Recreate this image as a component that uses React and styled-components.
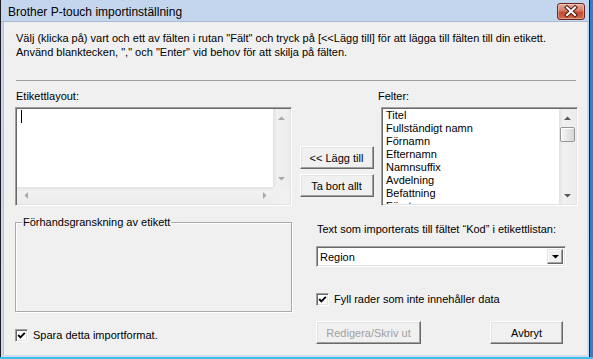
import React from 'react';
import styled, { createGlobalStyle } from 'styled-components';

const fields = [
    'Titel',
    'Fullständigt namn',
    'Förnamn',
    'Efternamn',
    'Namnsuffix',
    'Avdelning',
    'Befattning',
    'Företag',
];

function Arrow({ dir, color }) {
    const pts = {
        up: '0,4 3.5,0.5 7,4',
        down: '0,0 3.5,3.5 7,0',
        left: '4,0 0.5,3.5 4,7',
        right: '0,0 3.5,3.5 0,7',
    }[dir];
    const vertical = dir === 'up' || dir === 'down';
    return (
        <svg width={vertical ? 7 : 4} height={vertical ? 4 : 7} viewBox={vertical ? '0 0 7 4' : '0 0 4 7'}>
            <polygon points={pts} fill={color} />
        </svg>
    );
}

function CheckBox() {
    return (
        <Box>
            <svg width="9" height="9" viewBox="0 0 9 9">
                <polyline points="1.2,4 3.4,6.4 7.8,1.8" fill="none" stroke="#000" strokeWidth="1.9" />
            </svg>
        </Box>
    );
}

function VScroll({ disabled, thumb }) {
    const color = disabled ? '#a8a8a8' : '#5a5a5a';
    return (
        <VBar>
            <ArrowCell><Arrow dir="up" color={color} /></ArrowCell>
            <Track>{thumb && <Thumb />}</Track>
            <ArrowCell><Arrow dir="down" color={color} /></ArrowCell>
        </VBar>
    );
}

function HScroll() {
    return (
        <HBar>
            <ArrowCell><Arrow dir="left" color="#a8a8a8" /></ArrowCell>
            <HTrack />
            <ArrowCell><Arrow dir="right" color="#a8a8a8" /></ArrowCell>
        </HBar>
    );
}

function App() {
    return (
        <>
            <GlobalStyle />
            <Desktop>
                <Window>
                    <TitleBar>
                        <Title>Brother P-touch importinställning</Title>
                        <CloseButton>
                            <svg width="26" height="15" viewBox="0 0 26 15">
                                <path d="M9 3.5 L17 11 M17 3.5 L9 11" stroke="#4a1712" strokeWidth="4" strokeLinecap="square" />
                                <path d="M9 3.5 L17 11 M17 3.5 L9 11" stroke="#fff" strokeWidth="2" strokeLinecap="square" />
                            </svg>
                        </CloseButton>
                    </TitleBar>
                    <Content>
                        <Intro>
                            <div>Välj (klicka på) vart och ett av fälten i rutan "Fält" och tryck på [&lt;&lt;Lägg till] för att lägga till fälten till din etikett.</div>
                            <div>Använd blanktecken, "," och "Enter" vid behov för att skilja på fälten.</div>
                        </Intro>
                        <Separator />
                        <Upper>
                            <Column>
                                <Label>Etikettlayout:</Label>
                                <Sunken $hscroll>
                                    <EditArea><Caret /></EditArea>
                                    <VScroll disabled />
                                    <HScroll />
                                    <Corner />
                                </Sunken>
                            </Column>
                            <ButtonColumn>
                                <Button $w={74}>&lt;&lt; Lägg till</Button>
                                <Button $w={74}>Ta bort allt</Button>
                            </ButtonColumn>
                            <Column>
                                <Label $shift={-3}>Felter:</Label>
                                <Sunken>
                                    <List>
                                        {fields.map((f) => <Item key={f}>{f}</Item>)}
                                    </List>
                                    <VScroll thumb />
                                </Sunken>
                            </Column>
                        </Upper>
                        <Lower>
                            <LeftPane>
                                <GroupBox>
                                    <GroupLabel>Förhandsgranskning av etikett</GroupLabel>
                                </GroupBox>
                                <CheckRow $top={17}>
                                    <CheckBox />
                                    <span>Spara detta importformat.</span>
                                </CheckRow>
                            </LeftPane>
                            <RightPane>
                                <Label>Text som importerats till fältet “Kod” i etikettlistan:</Label>
                                <Combo>
                                    <ComboText>Region</ComboText>
                                    <DropButton><Arrow dir="down" color="#000" /></DropButton>
                                </Combo>
                                <CheckRow $top={26}>
                                    <CheckBox />
                                    <span>Fyll rader som inte innehåller data</span>
                                </CheckRow>
                                <ButtonRow>
                                    <Button $w={105} disabled>Redigera/Skriv ut</Button>
                                    <Button $w={73}>Avbryt</Button>
                                </ButtonRow>
                            </RightPane>
                        </Lower>
                    </Content>
                </Window>
                <EdgeStrip />
            </Desktop>
        </>
    );
}

const GlobalStyle = createGlobalStyle`
    html, body {
        margin: 0;
        padding: 0;
    }
    body {
        font-family: "Liberation Sans", Arial, sans-serif;
        font-size: 11px;
        color: #000;
        background: #3cbfe6;
        overflow: hidden;
    }
`
const Desktop = styled.div`
    width: 593px;
    height: 359px;
    display: flex;
    align-items: flex-start;
    background: #3cbfe6;
`
const EdgeStrip = styled.div`
    width: 3px;
    height: 357px;
    background: #2e7fcf;
`
const Window = styled.div`
    width: 590px;
    height: 357px;
    box-sizing: border-box;
    border-left: 1px solid #1e1e1e;
    border-right: 1px solid #1e1e1e;
    background: linear-gradient(#c4d6ed, #cddcf0);
    display: flex;
    flex-direction: column;
`
const TitleBar = styled.div`
    height: 21px;
    padding: 0 4px 0 7px;
    display: flex;
    align-items: center;
    justify-content: space-between;
    border-bottom: 1px solid #a9bbd3;
`
const Title = styled.span`
    font-size: 12px;
    margin-top: 3px;
`
const CloseButton = styled.div`
    width: 26px;
    height: 15px;
    margin-top: 2px;
    border: 1px solid #6a261f;
    border-radius: 3px;
    background: linear-gradient(#e8ab9c, #d77966 45%, #c34a30 55%, #d0694d);
    box-shadow: inset 0 0 0 1px rgba(255, 255, 255, 0.35);
    display: flex;
`
const Content = styled.div`
    flex: 1;
    margin: 0 2px 2px;
    background: #f0f0f0;
    padding: 0 9px 0 12px;
    box-shadow: inset 1px 0 #b4c3d6;
`
const Intro = styled.div`
    margin: 9px 0 0 1px;
    line-height: 14px;
    white-space: nowrap;
`
const Separator = styled.div`
    height: 1px;
    margin: 21px 2px 0 1px;
    background: #a0a0a0;
`
const Upper = styled.div`
    margin-top: 9px;
    display: grid;
    grid-template-columns: 277px 74px 197px;
    justify-content: space-between;
`
const Column = styled.div`
    display: flex;
    flex-direction: column;
    gap: 4px;
`
const Label = styled.div`
    line-height: 13px;
    margin-left: ${(p) => (p.$shift ?? 1)}px;
    white-space: nowrap;
`
const Sunken = styled.div`
    height: 99px;
    box-sizing: border-box;
    border: 1px solid;
    border-color: #a0a0a0 #ffffff #ffffff #a0a0a0;
    box-shadow: inset 1px 1px #696969, inset -1px -1px #e3e3e3;
    padding: 1px;
    background: #fff;
    display: grid;
    grid-template-columns: 1fr 17px;
    grid-template-rows: ${(p) => (p.$hscroll ? '1fr 17px' : '1fr')};
    overflow: hidden;
`
const EditArea = styled.div`
    padding: 1px 0 0 4px;
`
const Caret = styled.div`
    width: 1px;
    height: 13px;
    background: #000;
`
const VBar = styled.div`
    display: flex;
    flex-direction: column;
    background: linear-gradient(to right, #e2e2e2, #f1f1f1 25%, #ececec);
`
const HBar = styled.div`
    display: flex;
    background: linear-gradient(#e2e2e2, #f1f1f1 25%, #ececec);
`
const ArrowCell = styled.div`
    flex: 0 0 17px;
    height: 17px;
    display: flex;
    align-items: center;
    justify-content: center;
`
const Track = styled.div`
    flex: 1;
    padding: 0 1px;
`
const HTrack = styled.div`
    flex: 1;
`
const Thumb = styled.div`
    height: 15px;
    margin-top: 1px;
    box-sizing: border-box;
    border: 1px solid #969696;
    border-radius: 2px;
    background: linear-gradient(to right, #f7f7f7, #e6e6e6 50%, #d6d6d6);
    box-shadow: inset 1px 1px #fff;
`
const Corner = styled.div`
    background: #f0f0f0;
`
const List = styled.div`
    padding-left: 3px;
    overflow: hidden;
`
const Item = styled.div`
    height: 13px;
    line-height: 13px;
    white-space: nowrap;
`
const ButtonColumn = styled.div`
    padding-top: 56px;
    display: flex;
    flex-direction: column;
    gap: 5px;
`
const Button = styled.button`
    width: ${(p) => p.$w}px;
    height: 23px;
    padding: 0;
    box-sizing: border-box;
    font-family: "Liberation Sans", Arial, sans-serif;
    font-size: 11px;
    color: #000;
    background: #f0f0f0;
    border: 1px solid;
    border-color: #ffffff #696969 #696969 #ffffff;
    box-shadow: inset -1px -1px #a0a0a0, inset 1px 1px #e3e3e3;
    &:disabled {
        color: #a0a0a0;
    }
`
const Lower = styled.div`
    display: flex;
`
const LeftPane = styled.div`
    width: 277px;
    display: flex;
    flex-direction: column;
`
const GroupBox = styled.div`
    position: relative;
    margin-top: 16px;
    height: 90px;
    box-sizing: border-box;
    border: 1px solid #a9a9a9;
    box-shadow: 1px 1px #fff, inset 1px 1px #fff;
`
const GroupLabel = styled.span`
    position: absolute;
    left: 6px;
    top: -8px;
    padding: 0 1px;
    line-height: 14px;
    background: #f0f0f0;
`
const CheckRow = styled.div`
    margin-top: ${(p) => p.$top}px;
    display: flex;
    align-items: center;
    gap: 5px;
    line-height: 13px;
    white-space: nowrap;
`
const Box = styled.div`
    width: 13px;
    height: 13px;
    box-sizing: border-box;
    border: 1px solid;
    border-color: #a0a0a0 #ffffff #ffffff #a0a0a0;
    box-shadow: inset 1px 1px #696969, inset -1px -1px #e3e3e3;
    background: #fff;
    display: flex;
    align-items: center;
    justify-content: center;
`
const RightPane = styled.div`
    margin-left: 24px;
    width: 250px;
    display: flex;
    flex-direction: column;
    padding-top: 17px;
`
const Combo = styled.div`
    margin-top: 10px;
    height: 21px;
    box-sizing: border-box;
    border: 1px solid;
    border-color: #a0a0a0 #ffffff #ffffff #a0a0a0;
    box-shadow: inset 1px 1px #696969, inset -1px -1px #e3e3e3;
    background: #fff;
    padding: 2px 2px 2px 3px;
    display: flex;
    align-items: center;
`
const ComboText = styled.span`
    flex: 1;
`
const DropButton = styled.div`
    width: 16px;
    height: 15px;
    box-sizing: border-box;
    background: #f0f0f0;
    border: 1px solid;
    border-color: #e3e3e3 #696969 #696969 #e3e3e3;
    box-shadow: inset -1px -1px #a0a0a0, inset 1px 1px #fff;
    display: flex;
    align-items: center;
    justify-content: center;
`
const ButtonRow = styled.div`
    margin-top: 15px;
    display: flex;
    justify-content: space-between;
    padding-right: 3px;
`
export default App;
